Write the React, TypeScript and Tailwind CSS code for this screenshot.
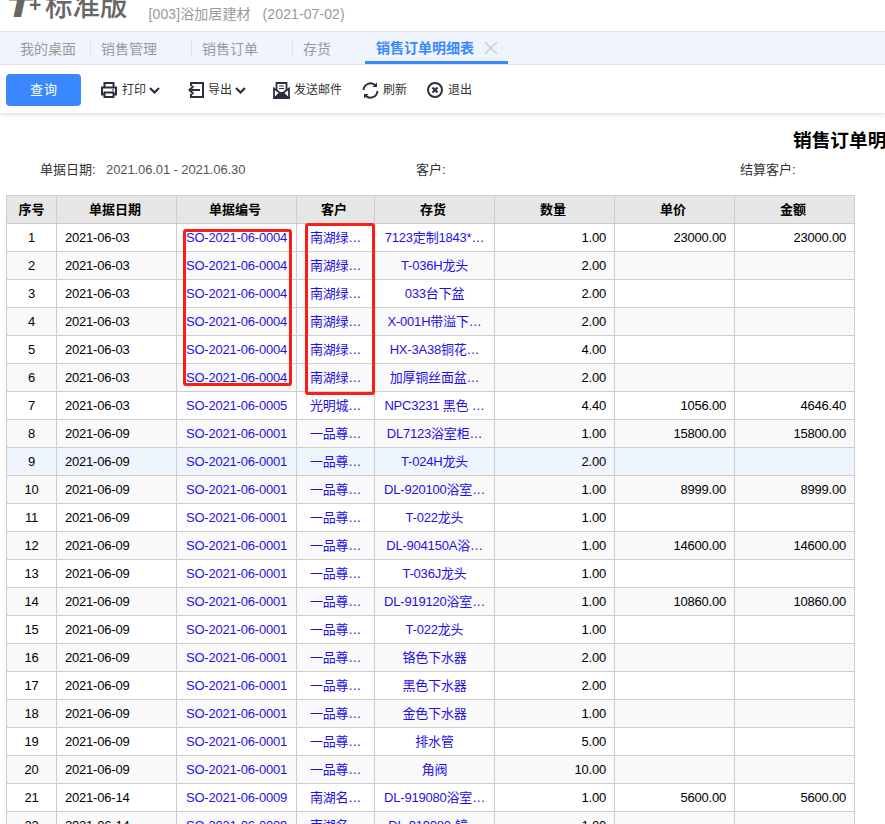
import { X } from 'lucide-react';

const FONT = "font-['Liberation_Sans','Noto_Sans_CJK_SC',sans-serif]";

interface Row {
  date: string;
  no: string;
  customer: string;
  item: string;
  qty: string;
  price?: string;
  amount?: string;
}

const rows: Row[] = [
  { date: '2021-06-03', no: 'SO-2021-06-0004', customer: '南湖绿…', item: '7123定制1843*…', qty: '1.00', price: '23000.00', amount: '23000.00' },
  { date: '2021-06-03', no: 'SO-2021-06-0004', customer: '南湖绿…', item: 'T-036H龙头', qty: '2.00' },
  { date: '2021-06-03', no: 'SO-2021-06-0004', customer: '南湖绿…', item: '033台下盆', qty: '2.00' },
  { date: '2021-06-03', no: 'SO-2021-06-0004', customer: '南湖绿…', item: 'X-001H带溢下…', qty: '2.00' },
  { date: '2021-06-03', no: 'SO-2021-06-0004', customer: '南湖绿…', item: 'HX-3A38铜花…', qty: '4.00' },
  { date: '2021-06-03', no: 'SO-2021-06-0004', customer: '南湖绿…', item: '加厚铜丝面盆…', qty: '2.00' },
  { date: '2021-06-03', no: 'SO-2021-06-0005', customer: '光明城…', item: 'NPC3231 黑色 …', qty: '4.40', price: '1056.00', amount: '4646.40' },
  { date: '2021-06-09', no: 'SO-2021-06-0001', customer: '一品尊…', item: 'DL7123浴室柜…', qty: '1.00', price: '15800.00', amount: '15800.00' },
  { date: '2021-06-09', no: 'SO-2021-06-0001', customer: '一品尊…', item: 'T-024H龙头', qty: '2.00' },
  { date: '2021-06-09', no: 'SO-2021-06-0001', customer: '一品尊…', item: 'DL-920100浴室…', qty: '1.00', price: '8999.00', amount: '8999.00' },
  { date: '2021-06-09', no: 'SO-2021-06-0001', customer: '一品尊…', item: 'T-022龙头', qty: '1.00' },
  { date: '2021-06-09', no: 'SO-2021-06-0001', customer: '一品尊…', item: 'DL-904150A浴…', qty: '1.00', price: '14600.00', amount: '14600.00' },
  { date: '2021-06-09', no: 'SO-2021-06-0001', customer: '一品尊…', item: 'T-036J龙头', qty: '1.00' },
  { date: '2021-06-09', no: 'SO-2021-06-0001', customer: '一品尊…', item: 'DL-919120浴室…', qty: '1.00', price: '10860.00', amount: '10860.00' },
  { date: '2021-06-09', no: 'SO-2021-06-0001', customer: '一品尊…', item: 'T-022龙头', qty: '1.00' },
  { date: '2021-06-09', no: 'SO-2021-06-0001', customer: '一品尊…', item: '铬色下水器', qty: '2.00' },
  { date: '2021-06-09', no: 'SO-2021-06-0001', customer: '一品尊…', item: '黑色下水器', qty: '2.00' },
  { date: '2021-06-09', no: 'SO-2021-06-0001', customer: '一品尊…', item: '金色下水器', qty: '1.00' },
  { date: '2021-06-09', no: 'SO-2021-06-0001', customer: '一品尊…', item: '排水管', qty: '5.00' },
  { date: '2021-06-09', no: 'SO-2021-06-0001', customer: '一品尊…', item: '角阀', qty: '10.00' },
  { date: '2021-06-14', no: 'SO-2021-06-0009', customer: '南湖名…', item: 'DL-919080浴室…', qty: '1.00', price: '5600.00', amount: '5600.00' },
  { date: '2021-06-14', no: 'SO-2021-06-0009', customer: '南湖名…', item: 'DL-919080-镜…', qty: '1.00' },
];

const INK = '#2a3040';

function PrinterIcon() {
  return (
    <svg width="16" height="16" viewBox="0 0 16 16" fill="none" stroke={INK} strokeWidth="2">
      <path d="M3.5 5V1h9v4" />
      <path d="M3.5 12.5H1V5.5h14v7h-2.5" />
      <path d="M3.5 10.5h9V15h-9z" />
      <path d="M11 8h2" strokeWidth="1" />
    </svg>
  );
}

function ExportIcon() {
  return (
    <svg width="16" height="16" viewBox="0 0 16 16" fill="none" stroke={INK} strokeWidth="2">
      <path d="M3 4V1h12v14H3v-3" />
      <path d="M12 8H1.5M5.5 4 1.5 8l4 4" />
    </svg>
  );
}

function MailIcon() {
  return (
    <svg width="17" height="17" viewBox="0 0 17 17" fill="none" stroke={INK} strokeWidth="1.8">
      <path d="M3.5 8V1h10v7" />
      <path d="M6 4h5M6 6.5h5" strokeWidth="1.2" />
      <path d="M1 6.5V16h15V6.5L8.5 12z" />
      <path d="M1 16l5.5-5.5h4L16 16z" fill={INK} strokeWidth="1" />
    </svg>
  );
}

function RefreshIcon() {
  return (
    <svg width="17" height="17" viewBox="0 0 17 17" fill="none" stroke={INK} strokeWidth="2">
      <path d="M1.5 8A7 7 0 0 1 13.5 3.5" />
      <path d="M15.5 9A7 7 0 0 1 3.5 13.5" />
      <path d="M15 0.5V5H10.5z" fill={INK} stroke="none" />
      <path d="M2 16.5V12h4.5z" fill={INK} stroke="none" />
    </svg>
  );
}

function ExitIcon() {
  return (
    <svg width="16" height="16" viewBox="0 0 16 16" fill="none" stroke={INK} strokeWidth="2">
      <circle cx="8" cy="8" r="7" />
      <path d="M5.5 5.5l5 5M10.5 5.5l-5 5" strokeWidth="2.2" />
    </svg>
  );
}

function Chevron() {
  return (
    <svg className="ml-[3px]" width="11" height="7" viewBox="0 0 11 7" fill="none" stroke={INK} strokeWidth="2.2">
      <path d="M1 1l4.5 4.5L10 1" />
    </svg>
  );
}

function Tab({ label, className }: { label: string; className: string }) {
  return <div className={`text-[14px] text-[#999] whitespace-nowrap ${className}`}>{label}</div>;
}

function Separator() {
  return <div className="w-px h-4 bg-[#dfe3ea]"></div>;
}

export default function App() {
  return (
    <div className={`relative w-[885px] h-[824px] overflow-hidden bg-white ${FONT}`}>
      {/* title bar, the logo is cut off by the top of the window */}
      <div className="flex items-start h-[31px] pl-[6px]">
        <div className="flex items-start -mt-[7px] text-[#666] whitespace-nowrap">
          <span className="font-['Inter',sans-serif] text-[28px] leading-[28px] font-black italic w-[22px] origin-left scale-x-[1.35]">T</span>
          <span className="text-[21px] leading-[22px] font-bold w-[18px] ml-[1px] mt-[1px]">+</span>
          <span className="text-[27.5px] leading-[28px] font-medium -ml-[2px]">标准版</span>
        </div>
        <span className="ml-[21px] mt-[4px] text-[14px] text-[#999] whitespace-nowrap tracking-[0.1px]">[003]浴加居建材&nbsp;&nbsp; (2021-07-02)</span>
      </div>

      {/* tabs */}
      <div className="flex items-center h-[34px] border-y border-[#e1e4ea] bg-[#f0f5fd]">
        <Tab label="我的桌面" className="ml-[20px] mr-[14px] pt-[2px]" />
        <Separator />
        <Tab label="销售管理" className="ml-[10px] mr-[34px] pt-[2px]" />
        <Separator />
        <Tab label="销售订单" className="ml-[10px] mr-[34px] pt-[2px]" />
        <Separator />
        <Tab label="存货" className="ml-[10px] mr-[34px] pt-[2px]" />
        <div className="flex items-center h-full pl-[11px] pr-[6px] border-b-[3px] border-[#3a88ff] pt-[3px]">
          <span className="text-[14px] font-bold text-[#3a88ff] whitespace-nowrap">销售订单明细表</span>
          <X className="ml-[6px] w-[22px] h-[22px] text-[#ccc]" strokeWidth={1.6} />
        </div>
      </div>

      {/* toolbar */}
      <div className="flex items-center h-[48px] pl-[6px] pt-[2px] text-[12px] text-[#333] shadow-[0_2px_4px_rgba(0,0,0,0.12)]">
        <button className="w-[75px] h-[32px] rounded bg-[#3a88ff] text-white text-[13px] tracking-[1px] pl-px">查询</button>
        <div className="ml-[20px] flex items-center">
          <PrinterIcon />
          <span className="ml-[5px]">打印</span>
          <Chevron />
        </div>
        <div className="ml-[28px] flex items-center">
          <ExportIcon />
          <span className="ml-[4px]">导出</span>
          <Chevron />
        </div>
        <div className="ml-[27px] flex items-center gap-[4px]">
          <MailIcon />
          <span>发送邮件</span>
        </div>
        <div className="ml-[20px] flex items-center gap-[4px]">
          <RefreshIcon />
          <span>刷新</span>
        </div>
        <div className="ml-[20px] flex items-center gap-[5px]">
          <ExitIcon />
          <span>退出</span>
        </div>
      </div>

      {/* report head */}
      <div className="pl-[793px] pt-[14px] h-[41px] text-[18.67px] leading-[27px] font-bold text-black whitespace-nowrap">销售订单明细表</div>
      <div className="flex items-center h-[32px] text-[13px] text-[#333] whitespace-nowrap">
        <span className="ml-[40px] w-[66px]">单据日期:</span>
        <span className="w-[310px] text-[#555] tracking-[-0.1px]">2021.06.01 - 2021.06.30</span>
        <span className="w-[324px]">客户:</span>
        <span>结算客户:</span>
      </div>

      {/* table */}
      <div className="relative ml-[6px] mt-[9px]">
        <table className="table-fixed border-collapse w-[849px] text-[13px] tracking-[-0.2px]">
          <colgroup>
            <col className="w-[50px]" />
            <col className="w-[120px]" />
            <col className="w-[120px]" />
            <col className="w-[78px]" />
            <col className="w-[120px]" />
            <col className="w-[120px]" />
            <col className="w-[120px]" />
            <col className="w-[120px]" />
          </colgroup>
          <thead>
            <tr className="h-[28px] bg-[#e6e6e6] text-black tracking-normal">
              <th className="border border-[#ccc] p-0 font-bold">序号</th>
              {['单据日期', '单据编号', '客户', '存货', '数量', '单价', '金额'].map((h) => (
                <th key={h} className="border border-[#ccc] p-0 pr-[3px] font-bold">{h}</th>
              ))}
            </tr>
          </thead>
          <tbody>
            {rows.map((r, i) => (
              <tr key={i} className={`h-[28px] ${i === 8 ? 'bg-[#eef5fd]' : i % 2 === 1 ? 'bg-[#f9f9f9]' : 'bg-white'}`}>
                <td className="border border-[#ccc] p-0 text-center text-black">{i + 1}</td>
                <td className="border border-[#ccc] p-0 pl-[8px] text-black">{r.date}</td>
                <td className="border border-[#ccc] p-0 text-center text-[#1f10e6]">{r.no}</td>
                <td className="border border-[#ccc] p-0 text-center text-[#1f10e6] whitespace-nowrap">{r.customer}</td>
                <td className="border border-[#ccc] p-0 text-center text-[#1f10e6] whitespace-nowrap">{r.item}</td>
                <td className="border border-[#ccc] p-0 pr-[8px] text-right text-black">{r.qty}</td>
                <td className="border border-[#ccc] p-0 pr-[8px] text-right text-black">{r.price}</td>
                <td className="border border-[#ccc] p-0 pr-[8px] text-right text-black">{r.amount}</td>
              </tr>
            ))}
          </tbody>
        </table>
        {/* red annotation boxes drawn over the table */}
        <div className="absolute left-[177px] top-[34px] w-[109px] h-[157px] border-[3px] border-[#fa1e14] rounded-[3px]"></div>
        <div className="absolute left-[299px] top-[28px] w-[70px] h-[172px] border-[3px] border-[#fa1e14] rounded-[3px]"></div>
      </div>
    </div>
  );
}
